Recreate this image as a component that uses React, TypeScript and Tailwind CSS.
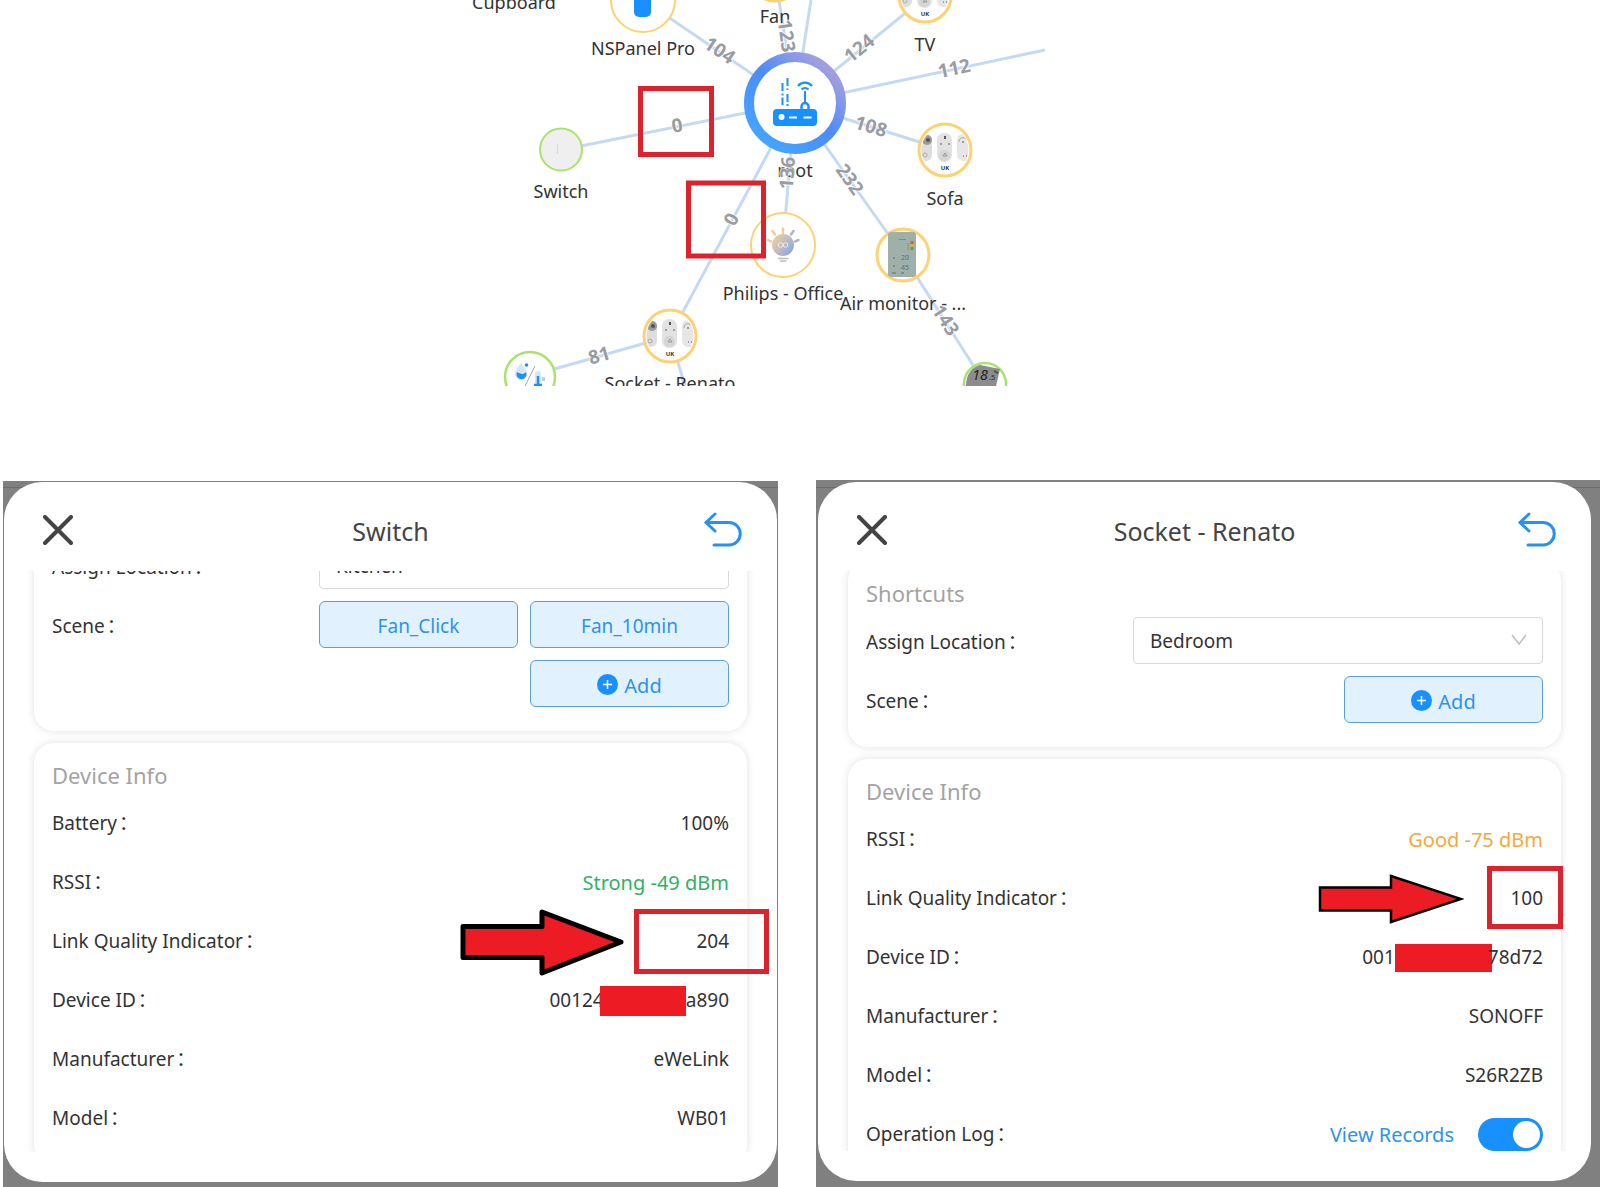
import { useId, useState } from 'react';
import type { ReactNode } from 'react';

const links = [
  { x: 643, y: 0, value: '104', lx: 720, ly: 50, angle: 34 },
  { x: 775, y: -25, value: '123', lx: 787, ly: 36, angle: 82 },
  { x: 925, y: -3, value: '124', lx: 859, ly: 48, angle: -39 },
  { x: 1045, y: 50, value: '112', lx: 954, ly: 68, angle: -12 },
  { x: 945, y: 150, value: '108', lx: 871, ly: 126, angle: 17 },
  { x: 561, y: 150, value: '0', lx: 677, ly: 125, angle: -11 },
  { x: 903, y: 255, value: '232', lx: 850, ly: 179, angle: 55 },
  { x: 783, y: 245, value: '136', lx: 787, ly: 173, angle: -86 },
  { x: 670, y: 336, value: '0', lx: 731, ly: 219, angle: -61 },
];

const labels = [
  { x: 514, y: 9, text: 'Cupboard' },
  { x: 643, y: 55, text: 'NSPanel Pro' },
  { x: 775, y: 23, text: 'Fan' },
  { x: 925, y: 51, text: 'TV' },
  { x: 561, y: 198, text: 'Switch' },
  { x: 945, y: 205, text: 'Sofa' },
  { x: 795, y: 177, text: 'root' },
  { x: 783, y: 300, text: 'Philips - Office' },
  { x: 903, y: 310, text: 'Air monitor - ...' },
  { x: 670, y: 390, text: 'Socket - Renato' },
];

function LinkValue({ x, y, angle, value }: { x: number; y: number; angle: number; value: string }) {
  return (
    <text
      x={x}
      y={y + 7}
      transform={`rotate(${angle} ${x} ${y})`}
      textAnchor="middle"
      className="fill-[#999ca1] text-[19px] font-bold"
      stroke="white"
      strokeWidth="2"
      strokeOpacity="0.7"
      paintOrder="stroke"
    >
      {value}
    </text>
  );
}

function SocketNode({ x, y }: { x: number; y: number }) {
  const clip = useId();
  return (
    <g transform={`translate(${x} ${y})`}>
      <circle r="26" fill="white" stroke="#fcd273" strokeWidth="3" />
      <clipPath id={clip}>
        <circle r="23.5" />
      </clipPath>
      <g clipPath={`url(#${clip})`}>
        <rect x="-26" y="-16" width="13" height="27" rx="6" fill="#dedede" />
        <circle cx="-18" cy="-10" r="5" fill="#9a9a9a" />
        <circle cx="-17" cy="-10" r="2" fill="#555" />
        <circle cx="-20" cy="5" r="2" fill="none" stroke="#aaa" />
        <rect x="-8" y="-17" width="15" height="29" rx="7" fill="#e2e2e2" />
        <rect x="-6" y="0" width="11" height="11" rx="5" fill="#d5d5d5" />
        <path d="M0 -14V-11" stroke="#555" strokeWidth="2" />
        <path d="M-4 -7V-5M4 -7V-5" stroke="#888" strokeWidth="1.5" />
        <path d="M-2 6L0 3L2 6Z" fill="none" stroke="#999" />
        <rect x="12" y="-16" width="14" height="27" rx="6" fill="#e6e6e6" />
        <path d="M14 -8a4 4 0 0 1 7 -3" fill="none" stroke="#aaa" />
        <path d="M17 -8h2M18 6h1M21 6h1" stroke="#888" strokeWidth="1.5" />
      </g>
      <text x="0" y="20" textAnchor="middle" className="fill-[#333] text-[6px] font-bold">UK</text>
    </g>
  );
}

function RootNode() {
  return (
    <g>
      <circle cx="795" cy="103" r="46" fill="white" stroke="url(#ring)" strokeWidth="10" />
      <g stroke="#1f90f7" fill="none" strokeWidth="2">
        <path d="M782.500 83V91M782.500 93.500V95.500M782.500 97.500V105M787.500 78V86M787.500 88.500V90M787.500 94V102M787.500 104V106" />
        <path d="M805 91V103" />
        <path d="M801.500 109V106.500a3.500 3.500 0 0 1 7 0V109" strokeWidth="2.5" />
        <path d="M798 86a9 9 0 0 1 14 0M801.500 89.500a5 5 0 0 1 7 0" strokeWidth="2.2" />
      </g>
      <rect x="773" y="109" width="44" height="17" rx="4" fill="#1890ff" />
      <circle cx="781.500" cy="117" r="3" fill="white" />
      <path d="M789 117.500h8M803.500 117.500h8" stroke="white" strokeWidth="2" />
    </g>
  );
}

function BulbNode() {
  return (
    <g>
      <circle cx="783" cy="245" r="32" fill="white" stroke="#fcd273" strokeWidth="2" />
      <circle cx="783" cy="245" r="11" fill="url(#bulb)" />
      <g fill="none" stroke="#f3ede6" strokeWidth="1">
        <circle cx="780.500" cy="245" r="2.300" />
        <circle cx="785.500" cy="245" r="2.300" />
      </g>
      <g strokeWidth="2.500" strokeLinecap="round">
        <path d="M768 240L771 241.500M772.500 231L775 234.500M783 228.500V233" stroke="#f3cd98" />
        <path d="M793.500 231L791 234.500M798.500 240L795 241.500" stroke="#b3b4c2" />
        <path d="M778.500 258.500H788M780.500 261H786" stroke="#bdbdbd" strokeWidth="1.500" />
      </g>
    </g>
  );
}

function NetworkMap() {
  return (
    <svg viewBox="0 0 1600 386" className="h-auto w-full shrink-0" role="img" aria-label="Zigbee map">
      <defs>
        <linearGradient id="ring" x1="0.1" y1="0.9" x2="0.8" y2="0.1">
          <stop offset="0" stopColor="#45a5ff" />
          <stop offset="0.55" stopColor="#4c8cfa" />
          <stop offset="1" stopColor="#9f9ee0" />
        </linearGradient>
        <linearGradient id="bulb" x1="0" y1="0.2" x2="0.9" y2="0.9">
          <stop offset="0" stopColor="#f3cfa0" />
          <stop offset="1" stopColor="#8aa8e6" />
        </linearGradient>
      </defs>

      <g stroke="#c4daf4" strokeWidth="3">
        {links.map((link) => (
          <line key={`${link.x}-${link.y}`} x1="795" y1="103" x2={link.x} y2={link.y} />
        ))}
        <line x1="795" y1="103" x2="811" y2="0" />
        <line x1="670" y1="336" x2="530" y2="376" />
        <line x1="670" y1="336" x2="685" y2="386" />
        <line x1="903" y1="255" x2="985" y2="384" />
      </g>

      <circle cx="643" cy="0" r="32" fill="white" stroke="#fcd273" strokeWidth="2" />
      <rect x="634" y="-20" width="17" height="37" rx="5" fill="#1890ff" />
      <circle cx="775" cy="-25" r="26" fill="white" stroke="#fcd273" strokeWidth="3" />
      <circle cx="561" cy="149.500" r="21" fill="#efefef" stroke="#a8e46c" strokeWidth="2" />
      <path d="M557.500 144V154" stroke="#dcdcdc" strokeWidth="1.500" />
      <SocketNode x={925} y={-4} />
      <SocketNode x={945} y={150} />
      <SocketNode x={670} y={336} />
      <BulbNode />

      <circle cx="903" cy="255" r="26" fill="white" stroke="#fcd273" strokeWidth="3" />
      <rect x="888" y="232" width="28" height="45" rx="3" fill="#9fb0aa" />
      <path d="M899 239.500h7" stroke="#7d8d87" />
      <path d="M912 241V244" stroke="#d9534f" strokeWidth="3" />
      <path d="M912 244V247" stroke="#e0b040" strokeWidth="3" />
      <path d="M912 247V250" stroke="#3cae5c" strokeWidth="3" />
      <path d="M908 243v7" stroke="#7d8d87" />
      <text x="905" y="260" textAnchor="middle" className="fill-[#5f6f69] text-[7px]">20</text>
      <text x="905" y="270" textAnchor="middle" className="fill-[#5f6f69] text-[7px]">45</text>
      <path d="M893 258h2M893 266h2M892 273h4M901 273h3" stroke="#5f6f69" />

      <circle cx="530" cy="377" r="25" fill="white" stroke="#a8e46c" strokeWidth="2.500" />
      <path d="M521 363c-3 4-6 7-6 11a6 6 0 0 0 12 0c0-4-3-7-6-11Z" fill="#d3e7fb" />
      <path d="M517 372a5 5 0 1 0 9 0c-2 3-6 2-9 0Z" fill="#1f8ff5" />
      <circle cx="526.500" cy="365" r="1.800" fill="#1f8ff5" />
      <path d="M535 366L525 386" stroke="#8fa6bf" />
      <rect x="535" y="371" width="6" height="15" rx="3" fill="#d3e7fb" />
      <path d="M538 376V386M534 385h8" stroke="#1f8ff5" strokeWidth="2.500" />
      <path d="M542 378h3M542 380h3" stroke="#6fa4dd" />

      <circle cx="985" cy="384" r="21" fill="white" stroke="#a8e46c" strokeWidth="2.500" />
      <path d="M966 386C966 374 972 367 980 365L1000 369L996 386Z" fill="#8c8c8c" />
      <text x="980" y="380" textAnchor="middle" className="fill-[#222] text-[14px] italic">18</text>
      <text x="989" y="380" className="fill-[#222] text-[7px]">.5</text>
      <path d="M994 371l4 2" stroke="#555" strokeWidth="2" />

      <g className="fill-[#333] text-[18px]" textAnchor="middle">
        {labels.map((label) => (
          <text key={label.text} x={label.x} y={label.y}>{label.text}</text>
        ))}
      </g>

      {links.map((link) => (
        <LinkValue key={`${link.lx}-${link.ly}`} x={link.lx} y={link.ly} angle={link.angle} value={link.value} />
      ))}
      <LinkValue x={599} y={355} angle={-16} value="81" />
      <LinkValue x={946} y={320} angle={57} value="143" />
      <RootNode />

      <g fill="none" stroke="#dc222c" strokeWidth="5">
        <rect x="640.500" y="88.500" width="71" height="66" />
        <rect x="688.500" y="183" width="75" height="73" />
      </g>
    </svg>
  );
}

function Modal({ title, children }: { title: string; children: ReactNode }) {
  return (
    <div className="relative flex h-full flex-col overflow-hidden rounded-[38px] bg-white pb-[30px]">
      <header className="flex h-[89px] shrink-0 items-center justify-between pt-[6px] pr-[35px] pl-[39px]">
        <button type="button" aria-label="Close">
          <svg width="30" height="30" viewBox="0 0 30 30" stroke="#444" strokeWidth="4" strokeLinecap="round">
            <path d="M2 2L28 28M28 2L2 28" />
          </svg>
        </button>
        <h2 className="pt-1 pl-1 text-[25px] text-[#444]">{title}</h2>
        <button type="button" aria-label="Back">
          <svg width="38" height="35" viewBox="0 0 38 35" fill="none" stroke="#2492f5" strokeWidth="3" strokeLinecap="round" strokeLinejoin="round">
            <path d="M11 2L2 10.500L11 19" />
            <path d="M2 10.500H25a11.200 11.200 0 0 1 0 22.500H10" />
          </svg>
        </button>
      </header>
      <div className="min-h-0 flex-1 overflow-hidden px-[30px]">{children}</div>
    </div>
  );
}

function Card({ title, children }: { title: string; children: ReactNode }) {
  return (
    <section className="rounded-[20px] bg-white px-[18px] pt-[18px] pb-6 shadow-[0_0_8px_rgba(0,0,0,0.12)]">
      <h3 className="mb-[10px] text-[22px] leading-[28px] text-[#a3a3a3]">{title}</h3>
      <div className="flex flex-col gap-3">{children}</div>
    </section>
  );
}

function Colon() {
  return <span className="ml-[2px]">：</span>;
}

function Row({ label, children }: { label: string; children?: ReactNode }) {
  return (
    <div className="relative flex h-[47px] items-center justify-between pt-[2px]">
      <span>{label}<Colon /></span>
      <span className="flex items-center">{children}</span>
    </div>
  );
}

function LocationRow({ value }: { value: string }) {
  const id = useId();
  return (
    <div className="flex h-[47px] items-center justify-between">
      <label htmlFor={id} className="pt-1">Assign Location<Colon /></label>
      <div className="relative w-[410px]">
        <select id={id} defaultValue={value} className="h-[47px] w-full appearance-none rounded-sm border border-[#d9d9d9] bg-white px-4 pt-[2px]">
          <option>{value}</option>
        </select>
        <svg className="pointer-events-none absolute top-4 right-4" width="16" height="14" viewBox="0 0 16 14" fill="none" stroke="#bfbfbf" strokeWidth="1.500">
          <path d="M1 2L8 11L15 2" />
        </svg>
      </div>
    </div>
  );
}

function SceneRow({ scenes }: { scenes: string[] }) {
  return (
    <div className="flex items-start justify-between">
      <span className="flex h-[47px] items-center pt-1">Scene<Colon /></span>
      <div className="grid w-[410px] grid-cols-2 gap-3">
        {scenes.map((scene) => (
          <button key={scene} type="button" className="h-[47px] rounded-md border border-[#5b9fd6] bg-[#e1f1fe] pt-1 text-[#2f93ea]">
            {scene}
          </button>
        ))}
        <button type="button" className="col-start-2 flex h-[47px] items-center justify-center gap-[6px] rounded-md border border-[#5b9fd6] bg-[#e1f1fe] pt-[2px] text-[#2f93ea]">
          <svg width="21" height="21" viewBox="0 0 21 21">
            <circle cx="10.500" cy="10.500" r="10.500" fill="#1890ff" />
            <path d="M10.500 6V15M6 10.500H15" stroke="white" strokeWidth="1.500" />
          </svg>
          <span className="pt-[2px] text-xl">Add</span>
        </button>
      </div>
    </div>
  );
}

export default function App() {
  const [logging, setLogging] = useState(true);

  return (
    <div className="flex h-screen flex-col overflow-hidden bg-white font-['Noto_Sans','Noto_Sans_CJK_SC',sans-serif] text-[19px] text-[#333]">
      <NetworkMap />

      <main className="mt-[94px] grid min-h-0 flex-1 grid-cols-[775fr_784fr] grid-rows-[minmax(0,1fr)] gap-[38px] pl-[3px]">
        <div className="relative mt-px min-w-0 bg-[#808080] px-px pt-px pb-[5px]">
          <div className="absolute inset-x-0 top-0 h-[7px] border-b border-[#6c6c6c]" />
          <Modal title="Switch">
            <div className="-mt-[85px] flex flex-col gap-3">
              <Card title="Shortcuts">
                <LocationRow value="Kitchen" />
                <SceneRow scenes={['Fan_Click', 'Fan_10min']} />
              </Card>
              <Card title="Device Info">
                <Row label="Battery">100%</Row>
                <Row label="RSSI">
                  <span className="text-xl text-[#2fb264]">Strong -49 dBm</span>
                </Row>
                <Row label="Link Quality Indicator">
                  204
                  <svg className="absolute -top-2 right-[105px]" width="164" height="67" viewBox="0 0 164 67">
                    <path d="M3 17.500H82V3L161 33L82 64V48.500H3Z" fill="#ed1c24" stroke="black" strokeWidth="5" strokeLinejoin="round" />
                  </svg>
                  <span className="absolute -top-2 -right-10 h-[65px] w-[135px] border-[5px] border-[#dc222c]" />
                </Row>
                <Row label="Device ID">
                  00124
                  <span className="-ml-1 h-[30px] w-[86px] bg-[#ed1c24]" />
                  a890
                </Row>
                <Row label="Manufacturer">eWeLink</Row>
                <Row label="Model">WB01</Row>
              </Card>
            </div>
          </Modal>
        </div>

        <div className="relative min-w-0 bg-[#808080] pt-[2px] pr-[9px] pb-[6px] pl-[2px]">
          <div className="absolute inset-x-0 top-0 h-[8px] border-b border-[#6c6c6c]" />
          <Modal title="Socket - Renato">
            <div className="-mt-[10px] flex flex-col gap-3">
              <Card title="Shortcuts">
                <LocationRow value="Bedroom" />
                <SceneRow scenes={[]} />
              </Card>
              <Card title="Device Info">
                <Row label="RSSI">
                  <span className="text-xl text-[#f5a93c]">Good -75 dBm</span>
                </Row>
                <Row label="Link Quality Indicator">
                  100
                  <svg className="absolute top-0 right-[79px]" width="146" height="50" viewBox="0 0 146 50">
                    <path d="M2 13.500H73V2L143 25L73 48V36.500H2Z" fill="#ed1c24" stroke="black" strokeWidth="2.500" />
                  </svg>
                  <span className="absolute -top-2 -right-5 h-[63px] w-[76px] border-[5px] border-[#dc222c]" />
                </Row>
                <Row label="Device ID">
                  001
                  <span className="-mr-1 h-[28px] w-[97px] bg-[#ed1c24]" />
                  78d72
                </Row>
                <Row label="Manufacturer">SONOFF</Row>
                <Row label="Model">S26R2ZB</Row>
                <Row label="Operation Log">
                  <a href="#records" className="text-xl text-[#2f93ea]">View Records</a>
                  <input
                    type="checkbox"
                    role="switch"
                    aria-label="Operation Log"
                    checked={logging}
                    onChange={(e) => setLogging(e.target.checked)}
                    className="ml-6 flex h-[33px] w-[65px] appearance-none items-center rounded-full bg-gray-300 px-[3px] before:size-[27px] before:rounded-full before:bg-white before:content-[''] checked:justify-end checked:bg-[#1890ff]"
                  />
                </Row>
              </Card>
            </div>
          </Modal>
        </div>
      </main>
    </div>
  );
}
